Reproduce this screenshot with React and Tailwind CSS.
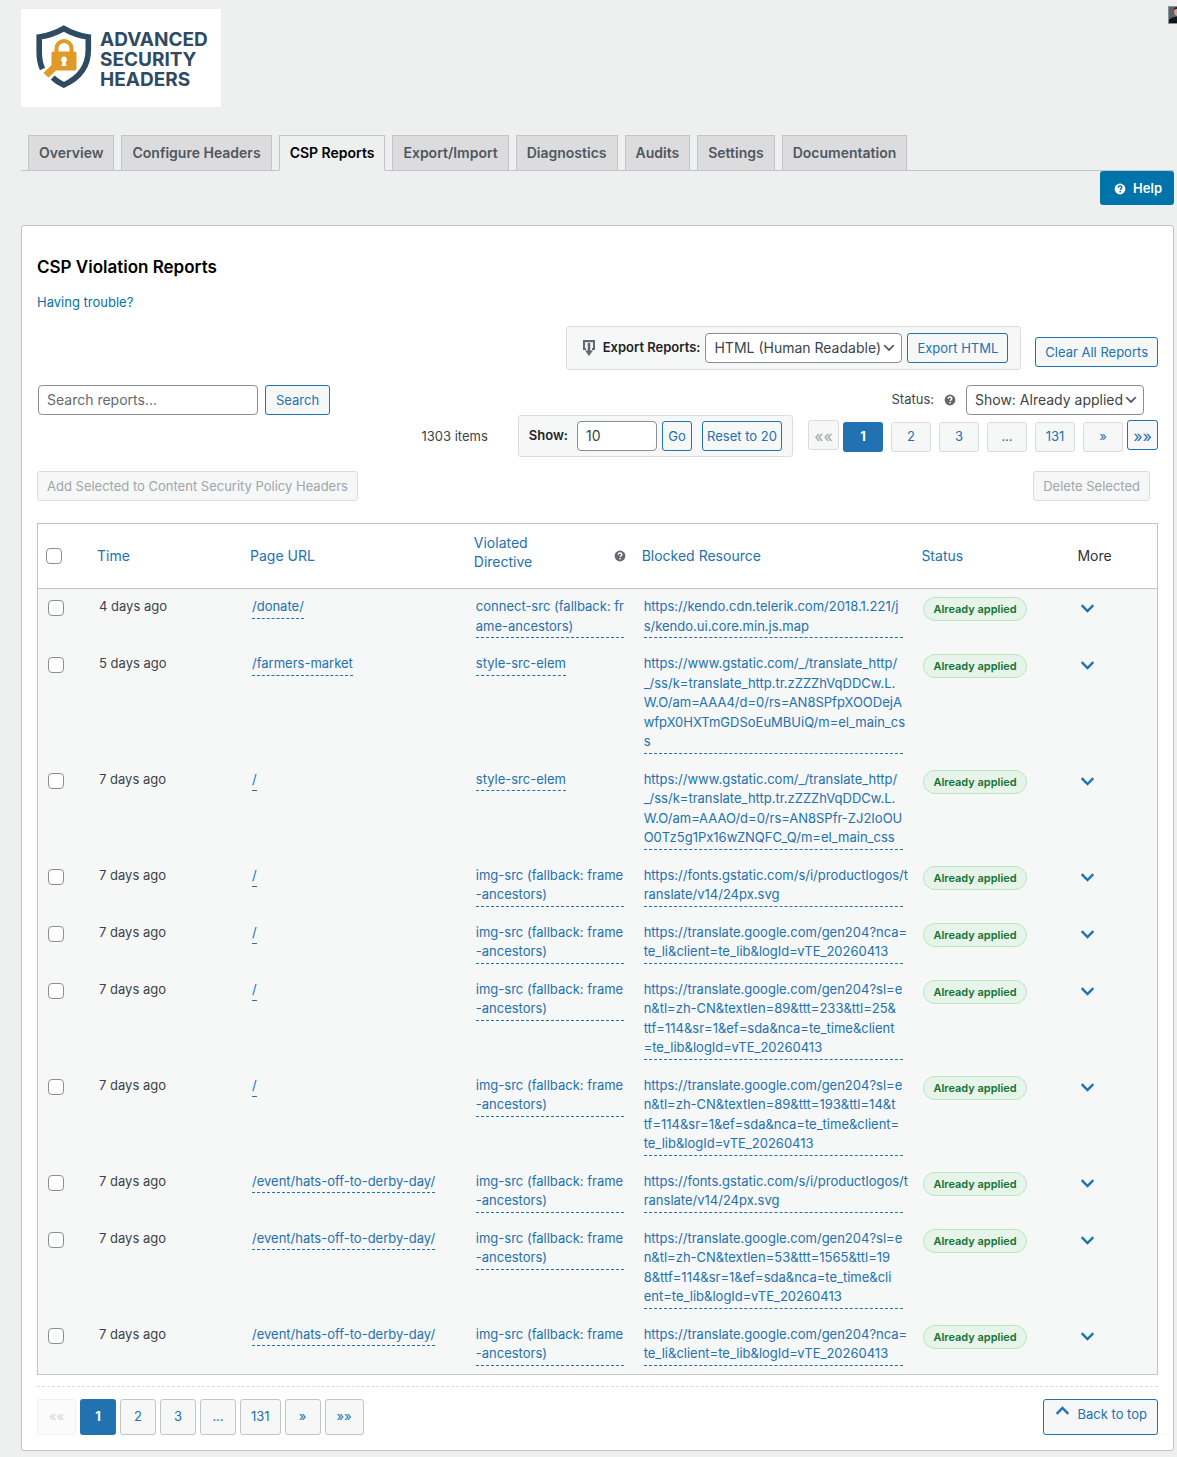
import React from 'react';

const tabs = ['Overview', 'Configure Headers', 'CSP Reports', 'Export/Import', 'Diagnostics', 'Audits', 'Settings', 'Documentation'];

// Long values are stored line by line so they always break at the same place
const reports = [
  {
    time: '4 days ago',
    page: '/donate/',
    directive: ['connect-src (fallback: fr', 'ame-ancestors)'],
    blocked: ['https://kendo.cdn.telerik.com/2018.1.221/j', 's/kendo.ui.core.min.js.map']
  },
  {
    time: '5 days ago',
    page: '/farmers-market',
    directive: ['style-src-elem'],
    blocked: [
      'https://www.gstatic.com/_/translate_http/',
      '_/ss/k=translate_http.tr.zZZZhVqDDCw.L.',
      'W.O/am=AAA4/d=0/rs=AN8SPfpXOODejA',
      'wfpX0HXTmGDSoEuMBUiQ/m=el_main_cs',
      's'
    ]
  },
  {
    time: '7 days ago',
    page: '/',
    directive: ['style-src-elem'],
    blocked: [
      'https://www.gstatic.com/_/translate_http/',
      '_/ss/k=translate_http.tr.zZZZhVqDDCw.L.',
      'W.O/am=AAAO/d=0/rs=AN8SPfr-ZJ2IoOU',
      'O0Tz5g1Px16wZNQFC_Q/m=el_main_css'
    ]
  },
  {
    time: '7 days ago',
    page: '/',
    directive: ['img-src (fallback: frame', '-ancestors)'],
    blocked: ['https://fonts.gstatic.com/s/i/productlogos/t', 'ranslate/v14/24px.svg']
  },
  {
    time: '7 days ago',
    page: '/',
    directive: ['img-src (fallback: frame', '-ancestors)'],
    blocked: ['https://translate.google.com/gen204?nca=', 'te_li&client=te_lib&logId=vTE_20260413']
  },
  {
    time: '7 days ago',
    page: '/',
    directive: ['img-src (fallback: frame', '-ancestors)'],
    blocked: [
      'https://translate.google.com/gen204?sl=e',
      'n&tl=zh-CN&textlen=89&ttt=233&ttl=25&',
      'ttf=114&sr=1&ef=sda&nca=te_time&client',
      '=te_lib&logId=vTE_20260413'
    ]
  },
  {
    time: '7 days ago',
    page: '/',
    directive: ['img-src (fallback: frame', '-ancestors)'],
    blocked: [
      'https://translate.google.com/gen204?sl=e',
      'n&tl=zh-CN&textlen=89&ttt=193&ttl=14&t',
      'tf=114&sr=1&ef=sda&nca=te_time&client=',
      'te_lib&logId=vTE_20260413'
    ]
  },
  {
    time: '7 days ago',
    page: '/event/hats-off-to-derby-day/',
    directive: ['img-src (fallback: frame', '-ancestors)'],
    blocked: ['https://fonts.gstatic.com/s/i/productlogos/t', 'ranslate/v14/24px.svg']
  },
  {
    time: '7 days ago',
    page: '/event/hats-off-to-derby-day/',
    directive: ['img-src (fallback: frame', '-ancestors)'],
    blocked: [
      'https://translate.google.com/gen204?sl=e',
      'n&tl=zh-CN&textlen=53&ttt=1565&ttl=19',
      '8&ttf=114&sr=1&ef=sda&nca=te_time&cli',
      'ent=te_lib&logId=vTE_20260413'
    ]
  },
  {
    time: '7 days ago',
    page: '/event/hats-off-to-derby-day/',
    directive: ['img-src (fallback: frame', '-ancestors)'],
    blocked: ['https://translate.google.com/gen204?nca=', 'te_li&client=te_lib&logId=vTE_20260413']
  }
];

const button = 'h-[30px] rounded-[3px] border border-[#2271b1] bg-[#f6f7f7] pt-0.5 text-[#2271b1]';
const disabledButton = 'h-[30px] rounded-[3px] border border-[#dcdcde] bg-[#f6f7f7] pt-0.5 text-[#a0a5aa]';
const field = 'h-[30px] rounded-[4px] border border-[#8c8f94] bg-white text-sm text-[#3c434a]';

const HelpIcon = ({ className }) => (
  <svg viewBox="0 0 20 20" className={className} aria-hidden="true">
    <circle cx="10" cy="10" r="9" fill="currentColor" />
    <path d="M7 7.8C7 5.9 8.300 5 10.100 5s3 1 3 2.600c0 2.100-2.700 2.200-2.700 4.100" fill="none" className="stroke-(--mark)" strokeWidth="2.200" />
    <circle cx="10.300" cy="14.300" r="1.400" className="fill-(--mark)" />
  </svg>
);

const ArrowIcon = ({ className }) => (
  <svg viewBox="0 0 18 18" className={className} aria-hidden="true">
    <path d="M3.700 6.200l5.800 5.800 5.800-5.800" fill="none" stroke="currentColor" strokeWidth="2.400" />
  </svg>
);

const Select = ({ label, children, className }) => (
  <div className="relative">
    <select aria-label={label} className={`${field} appearance-none pl-2 ${className}`}>
      {children}
    </select>
    <svg viewBox="0 0 20 20" className="pointer-events-none absolute top-[7px] right-[5px] size-4 text-[#50575e]" aria-hidden="true">
      <path d="M5 6l5 5 5-5 2 1-7 7-7-7z" fill="currentColor" />
    </svg>
  </div>
);

const Logo = () => (
  <div className="flex h-[98px] w-[200px] items-start bg-white pt-4 pl-[15px]">
    <svg viewBox="0 0 56 64" className="h-16 w-14 shrink-0" aria-hidden="true">
      <path
        d="M6.500 44C4 38.500 3 32 3.200 25V12C13 10.500 21 7.500 27.800 3.500 34.600 7.500 42.500 10.500 52.300 12V25C52.300 42 43 53 27.800 60 24 58.200 20 55.700 16.600 52.600"
        fill="none"
        stroke="#2f4a63"
        strokeWidth="5.600"
      />
      <path d="M20.500 29V23.500a7.500 7.500 0 0 1 15 0V29" fill="none" stroke="#e09a28" strokeWidth="4" />
      <path d="M17.500 26.500h21a2 2 0 0 1 2 2v15a2 2 0 0 1-2 2H20l-7.500 7-5-4.500 8-8V28.500a2 2 0 0 1 2-2z" fill="#e09a28" />
      <path d="M28 31.500a3 3 0 0 1 1.600 5.500l.9 4h-5l.9-4a3 3 0 0 1 1.600-5.500z" fill="#fff" />
    </svg>
    <div className="ml-2 flex flex-col pt-[5px] text-[19px] leading-5 font-bold text-[#2f4a63]">
      <span>ADVANCED</span>
      <span>SECURITY</span>
      <span>HEADERS</span>
    </div>
  </div>
);

const CellLink = ({ lines }) => (
  <a
    href="#details"
    className={`inline-block border-b border-dashed border-[#2271b1] pb-px align-top whitespace-pre text-[#2271b1] ${lines.length > 1 ? 'w-full' : ''}`}
  >
    {lines.join('\n')}
  </a>
);

const TopPagination = () => (
  <nav aria-label="Pagination" className="ml-[15px] flex gap-1">
    <button disabled className={`${disabledButton} mt-[5px] w-[31px] text-base leading-none`}>««</button>
    <div className="mt-[7px] flex gap-2">
      <button className="h-[30px] w-10 rounded-[3px] bg-[#2271b1] font-bold text-white">1</button>
      {['2', '3', '...', '131', '»'].map((page) => (
        <button key={page} className="h-[30px] w-10 rounded-[3px] border border-[#dcdcde] bg-[#f6f7f7] text-[#2271b1]">
          {page}
        </button>
      ))}
    </div>
    <button className={`${button} mt-[5px] w-[31px] text-base leading-none`}>»»</button>
  </nav>
);

const BottomPagination = () => (
  <nav aria-label="Pagination bottom" className="flex gap-1">
    <button disabled className="h-9 w-[39px] rounded-[3px] border border-[#f0f0f1] bg-[#fbfbfb] text-[#d5d7d9]">««</button>
    <button className="h-9 w-9 rounded-[3px] bg-[#2271b1] font-bold text-white">1</button>
    {['2', '3', '...', '131', '»', '»»'].map((page) => (
      <button
        key={page}
        className={`h-9 rounded-[3px] border border-[#c3c4c7] bg-[#f6f7f7] px-[10px] text-[#2271b1] ${page === '»»' ? 'min-w-[39px]' : 'min-w-9'}`}
      >
        {page}
      </button>
    ))}
  </nav>
);

const App = () => {
  return (
    <div className="min-h-screen bg-[#eef0f0] pt-[9px] pb-[6px] pl-[21px] font-['Inter',sans-serif] text-[13px] leading-normal text-[#3c434a]">
      {/* Header */}
      <header className="flex items-start justify-between">
        <Logo />
        <svg viewBox="0 0 9 18" className="-mt-[3px] h-[18px] w-[9px]" role="img" aria-label="Profile">
          <rect width="9" height="18" fill="#8c8f94" />
          <rect x="1" y="1" width="8" height="16" fill="#59636c" />
          <path d="M1 13.500l3.500-2L9 10.500V17H1z" fill="#11161b" />
          <path d="M6 4.500C6.500 2.500 8 2.500 9 2.500V10c-2 0-3-2.500-3-5.500z" fill="#d9a08c" />
          <path d="M5.500 4.500C5.500 2 7.500 1 9 1v2c-1.500 0-2.500.5-3.500 1.500z" fill="#2a2624" />
        </svg>
      </header>

      <div className="pr-[3px]">
        {/* Tabs */}
        <nav className="mt-7 flex gap-[7px] border-b border-[#c3c4c7] pl-[7px] text-sm font-semibold">
          {tabs.map((tab) => (
            <a
              key={tab}
              href="#tab"
              className={`-mb-px h-9 border border-[#c3c4c7] px-[10px] leading-[34px] ${
                tab === 'CSP Reports' ? 'border-b-[#eef0f0] bg-[#eef0f0] text-black' : 'bg-[#dcdcde] text-[#50575e]'
              }`}
            >
              {tab}
            </a>
          ))}
        </nav>

        <div className="flex justify-end">
          <button className="flex h-[34px] items-center gap-[7px] rounded-[3px] bg-[#0073aa] pt-px pr-3 pl-[14px] font-semibold text-white">
            <HelpIcon className="size-3 [--mark:#0073aa]" />
            Help
          </button>
        </div>

        {/* Reports panel */}
        <main className="mt-5 rounded-[3px] border border-[#c3c4c7] bg-white p-[15px]">
          <h3 className="mt-[14px] text-[17px] leading-6 font-semibold text-black">CSP Violation Reports</h3>
          <a href="#trouble" className="mt-[14px] inline-block text-[#0073aa]">Having trouble?</a>

          <div className="mt-[13px] flex justify-end gap-[14px]">
            <div className="flex h-11 items-center gap-[5px] rounded-[3px] border border-[#dcdcde] bg-[#f6f7f7] px-3">
              <div className="flex items-center gap-1 pt-px font-semibold text-[#1d2327]">
                <svg viewBox="0 0 20 20" className="size-5 text-[#646970]" aria-hidden="true">
                  <path d="M4 2h12v10h-3v-2h1V4.200H6V10h1v2H4z" fill="currentColor" />
                  <path d="M8.700 5h2.600v7.500H14L10 18l-4-5.500h2.700z" fill="currentColor" />
                </svg>
                Export Reports:
              </div>
              <Select label="Export Reports" className="w-[197px]">
                <option>HTML (Human Readable)</option>
              </Select>
              <button className={`${button} px-[9px]`}>Export HTML</button>
            </div>
            <button className={`${button} mt-[11px] px-[9px]`}>Clear All Reports</button>
          </div>

          <div className="mt-[15px] flex items-center justify-between pr-[14px] pl-px">
            <form className="flex gap-[7px]">
              <input type="search" aria-label="Search reports" placeholder="Search reports..." className={`${field} w-[220px] px-2 placeholder:text-[#646970]`} />
              <button type="button" className={`${button} px-[10px]`}>Search</button>
            </form>
            <div className="flex items-center gap-[10px]">
              <span className="pt-px">Status:</span>
              <HelpIcon className="size-3 text-[#646970] [--mark:#fff]" />
              <Select label="Status" className="w-[178px]">
                <option>Show: Already applied</option>
              </Select>
            </div>
          </div>

          <div className="flex items-start justify-end">
            <span className="mt-3 mr-[30px]">1303 items</span>
            <div className="flex h-[42px] items-center rounded-[3px] border border-[#dcdcde] bg-[#f6f7f7] px-[10px]">
              <label htmlFor="per-page" className="mr-[9px] pt-px font-semibold text-[#1d2327]">Show:</label>
              <input id="per-page" type="text" defaultValue="10" className={`${field} w-20 px-2`} />
              <button className={`${button} ml-[5px] w-[30px]`}>Go</button>
              <button className={`${button} ml-[10px] w-20 whitespace-nowrap`}>Reset to 20</button>
            </div>
            <TopPagination />
          </div>

          <div className="mt-[14px] flex justify-between pr-2">
            <button disabled className={`${disabledButton} px-[9px]`}>Add Selected to Content Security Policy Headers</button>
            <button disabled className={`${disabledButton} px-[9px]`}>Delete Selected</button>
          </div>

          {/* Violations table */}
          <div className="mt-[22px] border border-[#c3c4c7]">
            <table className="w-full table-fixed text-left">
              <colgroup>
                <col className="w-[51px]" />
                <col className="w-[153px]" />
                <col className="w-[20%]" />
                <col className="w-[15%]" />
                <col className="w-[25%]" />
                <col className="w-[156px]" />
                <col />
              </colgroup>
              <thead>
                <tr className="h-[65px] border-b border-[#c3c4c7] text-sm leading-[19px] text-[#2271b1] [&>th]:px-2 [&>th]:font-normal">
                  <th>
                    <input type="checkbox" aria-label="Select all" className="block size-4 appearance-none rounded-[4px] border border-[#8c8f94] bg-white" />
                  </th>
                  <th><a href="#time">Time</a></th>
                  <th><a href="#page">Page URL</a></th>
                  <th>
                    <div className="flex items-center justify-between gap-10">
                      <a href="#directive" className="pb-[7px]">Violated Directive</a>
                      <HelpIcon className="size-3 shrink-0 text-[#646970] [--mark:#fff]" />
                    </div>
                  </th>
                  <th><a href="#blocked">Blocked Resource</a></th>
                  <th><a href="#status">Status</a></th>
                  <th className="text-[#2c3338]">More</th>
                </tr>
              </thead>
              <tbody className="bg-[#f6f7f7]">
                {reports.map((report, index) => (
                  <tr key={index} className="align-top [&>td]:px-[10px] [&>td]:py-2">
                    <td>
                      <input type="checkbox" aria-label={`Select report ${index + 1}`} className="mt-[3px] block size-4 appearance-none rounded-[4px] border border-[#8c8f94] bg-white" />
                    </td>
                    <td>{report.time}</td>
                    <td><CellLink lines={[report.page]} /></td>
                    <td><CellLink lines={report.directive} /></td>
                    <td><CellLink lines={report.blocked} /></td>
                    <td>
                      <span className="inline-block h-6 rounded-full border border-[#b8e6bf] bg-[#e6f4ea] px-[9px] align-top text-[11px] leading-[22px] font-semibold whitespace-nowrap text-[#137333]">
                        Already applied
                      </span>
                    </td>
                    <td>
                      <button aria-label="More" className="mt-[2px] -ml-px block text-[#2271b1]">
                        <ArrowIcon className="size-[18px]" />
                      </button>
                    </td>
                  </tr>
                ))}
              </tbody>
            </table>
          </div>

          <div className="mt-[11px] flex justify-between border-t border-dashed border-[#dcdcde] pt-3">
            <BottomPagination />
            <button className="flex h-9 items-start gap-[6px] rounded-[3px] border border-[#2271b1] bg-[#f6f7f7] px-[10px] pt-[5px] text-[#2271b1]">
              <ArrowIcon className="-mt-[3px] size-[18px] rotate-180" />
              Back to top
            </button>
          </div>
        </main>
      </div>
    </div>
  );
};

export default App;
